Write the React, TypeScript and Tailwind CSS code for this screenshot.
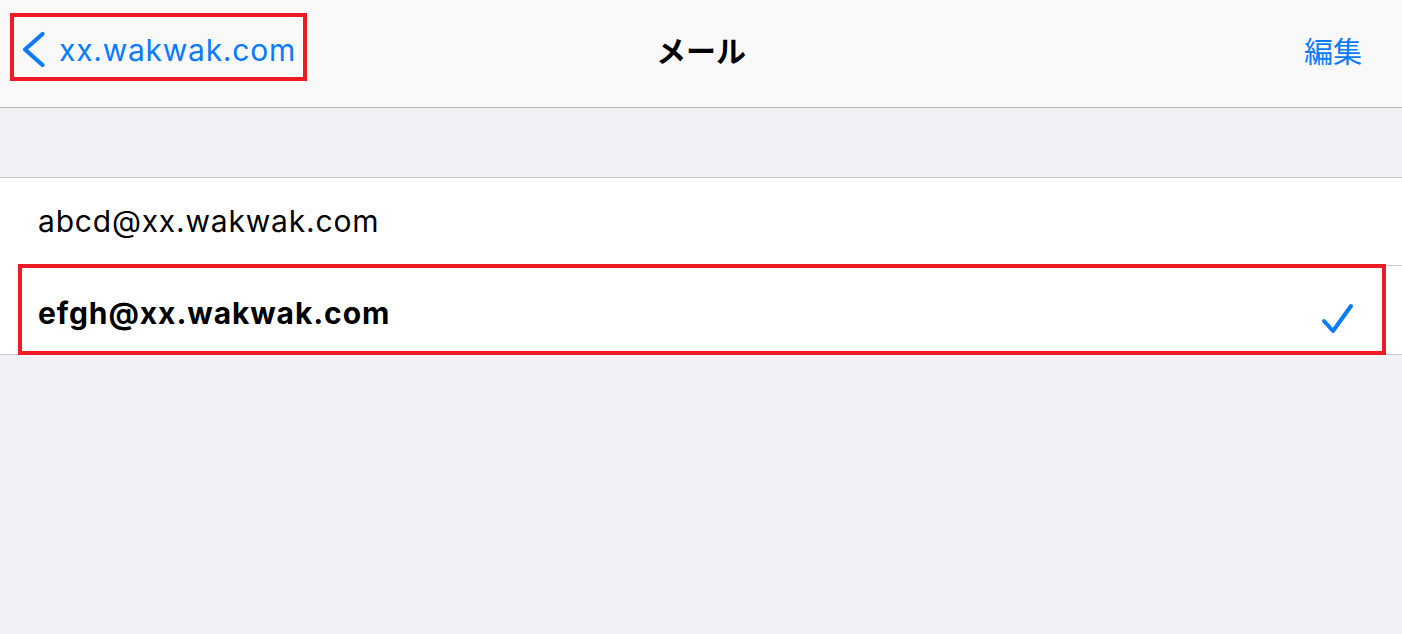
const FONT = '"Inter", "Noto Sans CJK JP", sans-serif'

export default function App() {
  return (
    <div className="w-[1402px] h-[634px] bg-[#f1f1f6] overflow-hidden" style={{ fontFamily: FONT }}>
      <header className="relative h-[108px] bg-[#f9f9f9] border-b border-[#b3b3b3] flex items-start justify-between pl-[10px] pr-[40px] pt-[13px]">
        <div className="flex items-center h-[68px] w-[297px] pl-[7px] pt-[6px] border-[4px] border-[#ed1c24]">
          <svg width="26" height="38" viewBox="0 0 26 38" className="mr-[12px]">
            <path d="M21.5 3 L4 18.5 L21.5 34" fill="none" stroke="#0a7aff" strokeWidth="4.2" strokeLinecap="round" strokeLinejoin="round" />
          </svg>
          <span className="text-[30px] text-[#0a7aff] tracking-[0.75px]">xx.wakwak.com</span>
        </div>
        <div className="absolute left-1/2 -translate-x-1/2 top-[29px] text-[30px] font-bold text-black">メール</div>
        <span className="text-[29px] text-[#0a7aff] mt-[18px]">編集</span>
      </header>
      <div className="h-[69px]" />
      <div className="bg-white border-t border-b border-[#c8c7cc]">
        <div className="ml-[18px] h-[88px] flex items-center pl-[20px] border-b border-[#c8c7cc]">
          <span className="text-[30px] text-black tracking-[0.8px]">abcd@xx.wakwak.com</span>
        </div>
        <div className="h-[88px] pl-[18px] pr-[16px] flex">
          <div className="flex-1 flex items-center justify-between border-[4px] border-[#ed1c24] mt-[-2px] mb-[-1px] pl-[16px] pr-[28px]">
            <span className="text-[30px] font-bold text-black tracking-[0.9px] mt-[8px]">efgh@xx.wakwak.com</span>
            <svg width="34" height="32" viewBox="0 0 34 32" className="mt-[16px]">
              <path d="M4 19 L13 29 L31 4" fill="none" stroke="#0a7aff" strokeWidth="4" strokeLinecap="round" strokeLinejoin="round" />
            </svg>
          </div>
        </div>
      </div>
    </div>
  )
}
